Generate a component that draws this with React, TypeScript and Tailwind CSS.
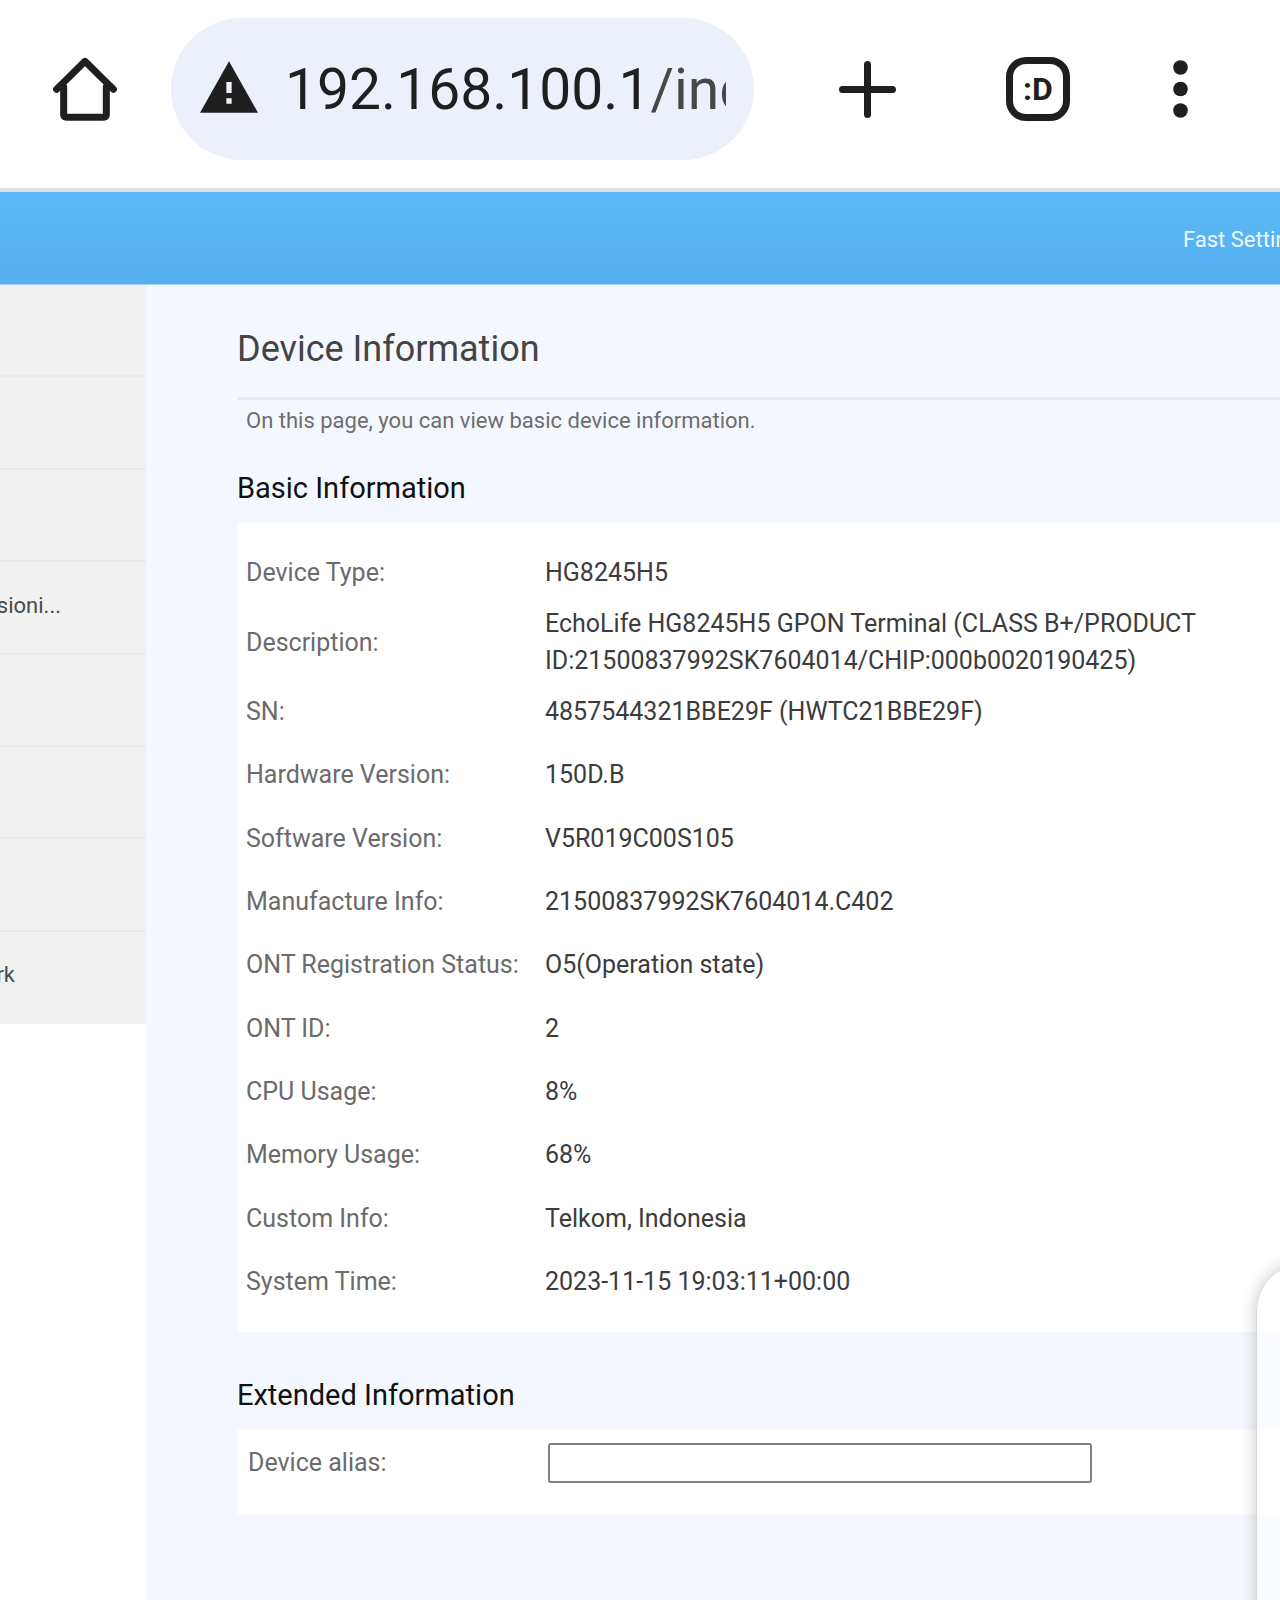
import React from "react";

const MENU = ["", "", "", "sioni...", "", "", "", "rk"];

const BASIC: [string, string][] = [
  ["Device Type:", "HG8245H5"],
  ["Description:", "EchoLife HG8245H5 GPON Terminal (CLASS B+/PRODUCT ID:21500837992SK7604014/CHIP:000b0020190425)"],
  ["SN:", "4857544321BBE29F (HWTC21BBE29F)"],
  ["Hardware Version:", "150D.B"],
  ["Software Version:", "V5R019C00S105"],
  ["Manufacture Info:", "21500837992SK7604014.C402"],
  ["ONT Registration Status:", "O5(Operation state)"],
  ["ONT ID:", "2"],
  ["CPU Usage:", "8%"],
  ["Memory Usage:", "68%"],
  ["Custom Info:", "Telkom, Indonesia"],
  ["System Time:", "2023-11-15 19:03:11+00:00"],
];

function HomeIcon() {
  return (
    <svg className="size-16" viewBox="0 0 192 192" fill="none" stroke="currentColor" strokeLinejoin="round">
      <path d="M11 97 L96 13 L181 97" strokeWidth="21" strokeLinecap="round" />
      <path d="M32 84 V172 Q32 181 41 181 H151 Q160 181 160 172 V84" strokeWidth="21" />
    </svg>
  );
}

function WarningIcon() {
  return (
    <svg className="mb-1 h-[52px] w-[58px] shrink-0" viewBox="0 0 174 154" fill="currentColor">
      <path fillRule="evenodd" d="M87 0 L174 154 H0 Z M79 62 V95 H95 V62 Z M79 111 V127 H95 V111 Z" />
    </svg>
  );
}

function PlusIcon() {
  return (
    <svg className="size-[57px]" viewBox="0 0 57 57" stroke="currentColor" strokeWidth="7" strokeLinecap="round">
      <path d="M28.5 3.5 V53.5 M3.5 28.5 H53.5" />
    </svg>
  );
}

function DotsIcon() {
  return (
    <svg className="h-[58px] w-[15px]" viewBox="0 0 15 58" fill="currentColor">
      <circle cx="7.5" cy="7.5" r="7.3" />
      <circle cx="7.5" cy="29" r="7.3" />
      <circle cx="7.5" cy="50.5" r="7.3" />
    </svg>
  );
}

function BrowserBar() {
  return (
    <header className="flex items-center border-b-4 border-[#dee1dc] bg-white pt-[18px] pr-[92px] pb-[28px] pl-[53px] text-[#1f1f1f]">
      <button type="button" aria-label="Home" className="shrink-0">
        <HomeIcon />
      </button>
      <button
        type="button"
        aria-label="Address"
        className="ml-[54px] flex h-[142px] min-w-0 flex-1 items-center rounded-full bg-[#ebf0fa] pr-7 pl-[29px]"
      >
        <WarningIcon />
        <span className="ml-[27px] min-w-0 flex-1 overflow-hidden pt-0.5 text-left text-[57px] leading-[72px] whitespace-nowrap">
          192.168.100.1<span className="text-[#474747]">/ind</span>
        </span>
      </button>
      <button type="button" aria-label="New tab" className="ml-[85px] shrink-0">
        <PlusIcon />
      </button>
      <button
        type="button"
        aria-label="Switch tabs"
        className="ml-[110px] flex size-16 shrink-0 items-center justify-center rounded-[20px] border-7 border-[#1f1f1f] text-[32px] leading-none font-bold"
      >
        :D
      </button>
      <button type="button" aria-label="Menu" className="ml-[103px] shrink-0">
        <DotsIcon />
      </button>
    </header>
  );
}

function SideMenu() {
  return (
    <nav className="w-[146px] shrink-0 bg-white">
      <ul className="flex h-[739px] flex-col bg-[#f1f1f1] text-[22px] text-[#4a4a4a]">
        {MENU.map((text, i) => (
          <li key={i} className="flex flex-1 items-center border-b-2 border-[#e9e9e9] pb-1 last:border-[#f1f1f1]">
            {text && (
              <a
                href="#"
                className={
                  text === "rk"
                    ? "flex w-[15px] justify-end overflow-hidden whitespace-nowrap"
                    : "flex w-[61px] justify-end overflow-hidden whitespace-nowrap"
                }
              >
                {text}
              </a>
            )}
          </li>
        ))}
      </ul>
    </nav>
  );
}

export default function App() {
  return (
    <div className="relative flex min-h-screen flex-col overflow-hidden bg-white font-['Roboto',sans-serif]">
      <BrowserBar />
      <div className="flex h-[93px] items-center justify-end border-b border-[#a5d3f7] bg-linear-to-b from-[#5cb8f8] to-[#55afee] pt-0.5">
        <a href="#" className="w-[97px] overflow-hidden text-[22px] whitespace-nowrap text-white/90">
          Fast Settings
        </a>
      </div>
      <div className="flex flex-1">
        <SideMenu />
        <main className="min-w-0 flex-1 bg-[#f4f8fe] pl-[91px]">
          <h1 className="border-b-3 border-[#e9ebed] pt-10 pb-6 text-[36px] leading-[48px] text-[#444]">
            Device Information
          </h1>
          <p className="pt-[5px] pl-[9px] text-[22px] leading-[32px] text-[#6d6d6d]">
            On this page, you can view basic device information.
          </p>
          <h2 className="pt-[33px] pb-[17px] text-[29px] leading-[36px] text-[#111]">Basic Information</h2>
          <div className="bg-white pt-[18px] pb-[19px] pl-[9px]">
            <table className="h-[772px] w-full text-left text-[25px] leading-[37px]">
              <tbody>
                {BASIC.map(([label, value]) => (
                  <tr key={label} className={label === "Description:" ? "h-[75px]" : "h-[63px]"}>
                    <th scope="row" className="w-[299px] p-0 font-normal whitespace-nowrap text-[#6b6b6b]">
                      {label}
                    </th>
                    <td className="p-0 pr-14 text-[#3c3c3c]">{value}</td>
                  </tr>
                ))}
              </tbody>
            </table>
          </div>
          <h2 className="pt-[45px] pb-[16px] text-[29px] leading-[36px] text-[#111]">Extended Information</h2>
          <div className="flex h-[86px] items-start bg-white pt-[14px] pl-[11px]">
            <label htmlFor="alias" className="w-[300px] text-[25px] leading-[40px] text-[#6b6b6b]">
              Device alias:
            </label>
            <input
              id="alias"
              type="text"
              className="h-10 w-[544px] rounded-[3px] border-2 border-[#808080] bg-white px-2 text-[25px] text-[#3c3c3c] outline-none"
            />
          </div>
        </main>
      </div>
      <div className="absolute top-[1263px] -right-20 -bottom-20 w-[104px] rounded-[48px] border border-[#d4d6d8] bg-white/60 shadow-[0_0_16px_rgba(0,0,0,0.22)]" />
    </div>
  );
}
